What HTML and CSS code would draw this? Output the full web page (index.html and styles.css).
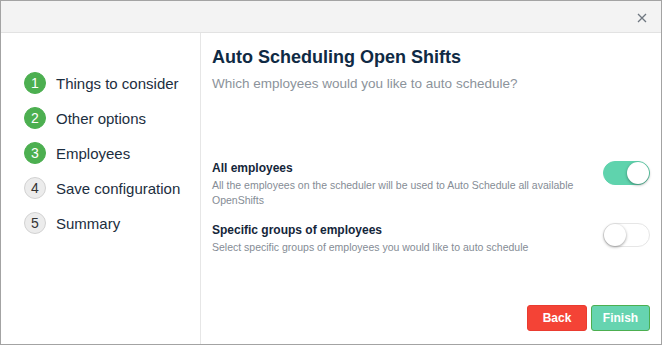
FILE: index.html
```html
<!DOCTYPE html>
<html lang="en">
<head>
  <meta charset="UTF-8" />
  <title>Auto Scheduling Open Shifts</title>
  <link rel="stylesheet" href="styles.css">
</head>
<body>
  <div class="modal">
    <div class="modal-header">
      <button class="close" aria-label="Close">
        <svg width="10" height="10" viewBox="0 0 10 10"><path d="M1 1 L9 9 M9 1 L1 9" stroke="#6f7780" stroke-width="1.3" fill="none"/></svg>
      </button>
    </div>
    <div class="modal-body">
      <ul class="steps">
        <li class="step done"><span class="num">1</span>Things to consider</li>
        <li class="step done"><span class="num">2</span>Other options</li>
        <li class="step done"><span class="num">3</span>Employees</li>
        <li class="step"><span class="num">4</span>Save configuration</li>
        <li class="step"><span class="num">5</span>Summary</li>
      </ul>
      <div class="content">
        <h2>Auto Scheduling Open Shifts</h2>
        <p class="subtitle">Which employees would you like to auto schedule?</p>

        <div class="option">
          <div class="option-text">
            <h3>All employees</h3>
            <p>All the employees on the scheduler will be used to Auto Schedule all available OpenShifts</p>
          </div>
          <span class="toggle on"><span class="knob"></span></span>
        </div>

        <div class="option">
          <div class="option-text">
            <h3>Specific groups of employees</h3>
            <p>Select specific groups of employees you would like to auto schedule</p>
          </div>
          <span class="toggle"><span class="knob"></span></span>
        </div>

        <div class="actions">
          <button class="btn back">Back</button>
          <button class="btn finish">Finish</button>
        </div>
      </div>
    </div>
  </div>
</body>
</html>
```

FILE: styles.css
```css
* {
  margin: 0;
  padding: 0;
  box-sizing: border-box;
}
body {
  font-family: Arial, 'Liberation Sans', sans-serif;
  background: #ffffff;
  width: 662px;
  height: 345px;
  overflow: hidden;
}
.modal {
  width: 662px;
  height: 345px;
  border: 1px solid #a3a3a3;
  display: flex;
  flex-direction: column;
  background: #fff;
}
.modal-header {
  height: 32px;
  background: #f3f3f3;
  border-bottom: 1px solid #e2e2e2;
  display: flex;
  justify-content: flex-end;
  align-items: center;
  padding-right: 13px;
  flex-shrink: 0;
}
.close {
  border: none;
  background: none;
  width: 12px;
  height: 12px;
  display: flex;
  align-items: center;
  justify-content: center;
  margin-top: 2px;
}
.modal-body {
  flex: 1;
  display: flex;
}
.steps {
  list-style: none;
  width: 200px;
  border-right: 1px solid #e6e6e6;
  padding: 39px 0 0 23px;
  flex-shrink: 0;
}
.step {
  display: flex;
  align-items: center;
  height: 22px;
  margin-bottom: 13px;
  font-size: 15px;
  color: #1c2e40;
}
.step .num {
  width: 22px;
  height: 22px;
  border-radius: 50%;
  background: #ececec;
  border: 1px solid #d2d2d2;
  color: #333;
  font-size: 14px;
  display: flex;
  align-items: center;
  justify-content: center;
  margin-right: 10px;
}
.step.done .num {
  background: #4caf50;
  border-color: #4caf50;
  color: #fff;
}
.content {
  flex: 1;
  padding: 13px 11px 0 11px;
  display: flex;
  flex-direction: column;
}
.content h2 {
  font-size: 18px;
  font-weight: bold;
  color: #0f2a44;
  line-height: 22px;
}
.subtitle {
  font-size: 13.5px;
  color: #8c939b;
  margin-top: 7px;
  line-height: 18px;
  margin-bottom: 67px;
}
.option {
  display: flex;
  justify-content: space-between;
  align-items: flex-start;
  margin-bottom: 14px;
}
.option-text h3 {
  font-size: 12px;
  font-weight: bold;
  color: #14263a;
  line-height: 16px;
}
.option-text p {
  font-size: 10.5px;
  color: #858c95;
  line-height: 15px;
  margin-top: 2px;
  max-width: 375px;
}
.toggle {
  width: 47px;
  height: 24px;
  border-radius: 12px;
  background: #fff;
  border: 1px solid #e6e6e6;
  position: relative;
  flex-shrink: 0;
  margin-top: 1px;
}
.toggle.on {
  background: #5fd3ad;
  border-color: #5fd3ad;
}
.toggle .knob {
  position: absolute;
  top: 0;
  left: 0;
  width: 22px;
  height: 22px;
  border-radius: 50%;
  background: #fff;
  box-shadow: 0 1px 3px rgba(0, 0, 0, 0.4);
}
.toggle.on .knob {
  left: 23px;
}
.actions {
  margin-top: auto;
  display: flex;
  justify-content: flex-end;
  gap: 4px;
  padding-bottom: 13px;
}
.btn {
  height: 26px;
  border-radius: 3px;
  font-family: Arial, 'Liberation Sans', sans-serif;
  font-size: 12px;
  font-weight: bold;
  color: #fff;
  border: 1px solid transparent;
}
.btn.back {
  width: 60px;
  background: #f44336;
  border-color: #ea3b30;
}
.btn.finish {
  width: 59px;
  background: #66d4b0;
  border-color: #4caf50;
}
```
